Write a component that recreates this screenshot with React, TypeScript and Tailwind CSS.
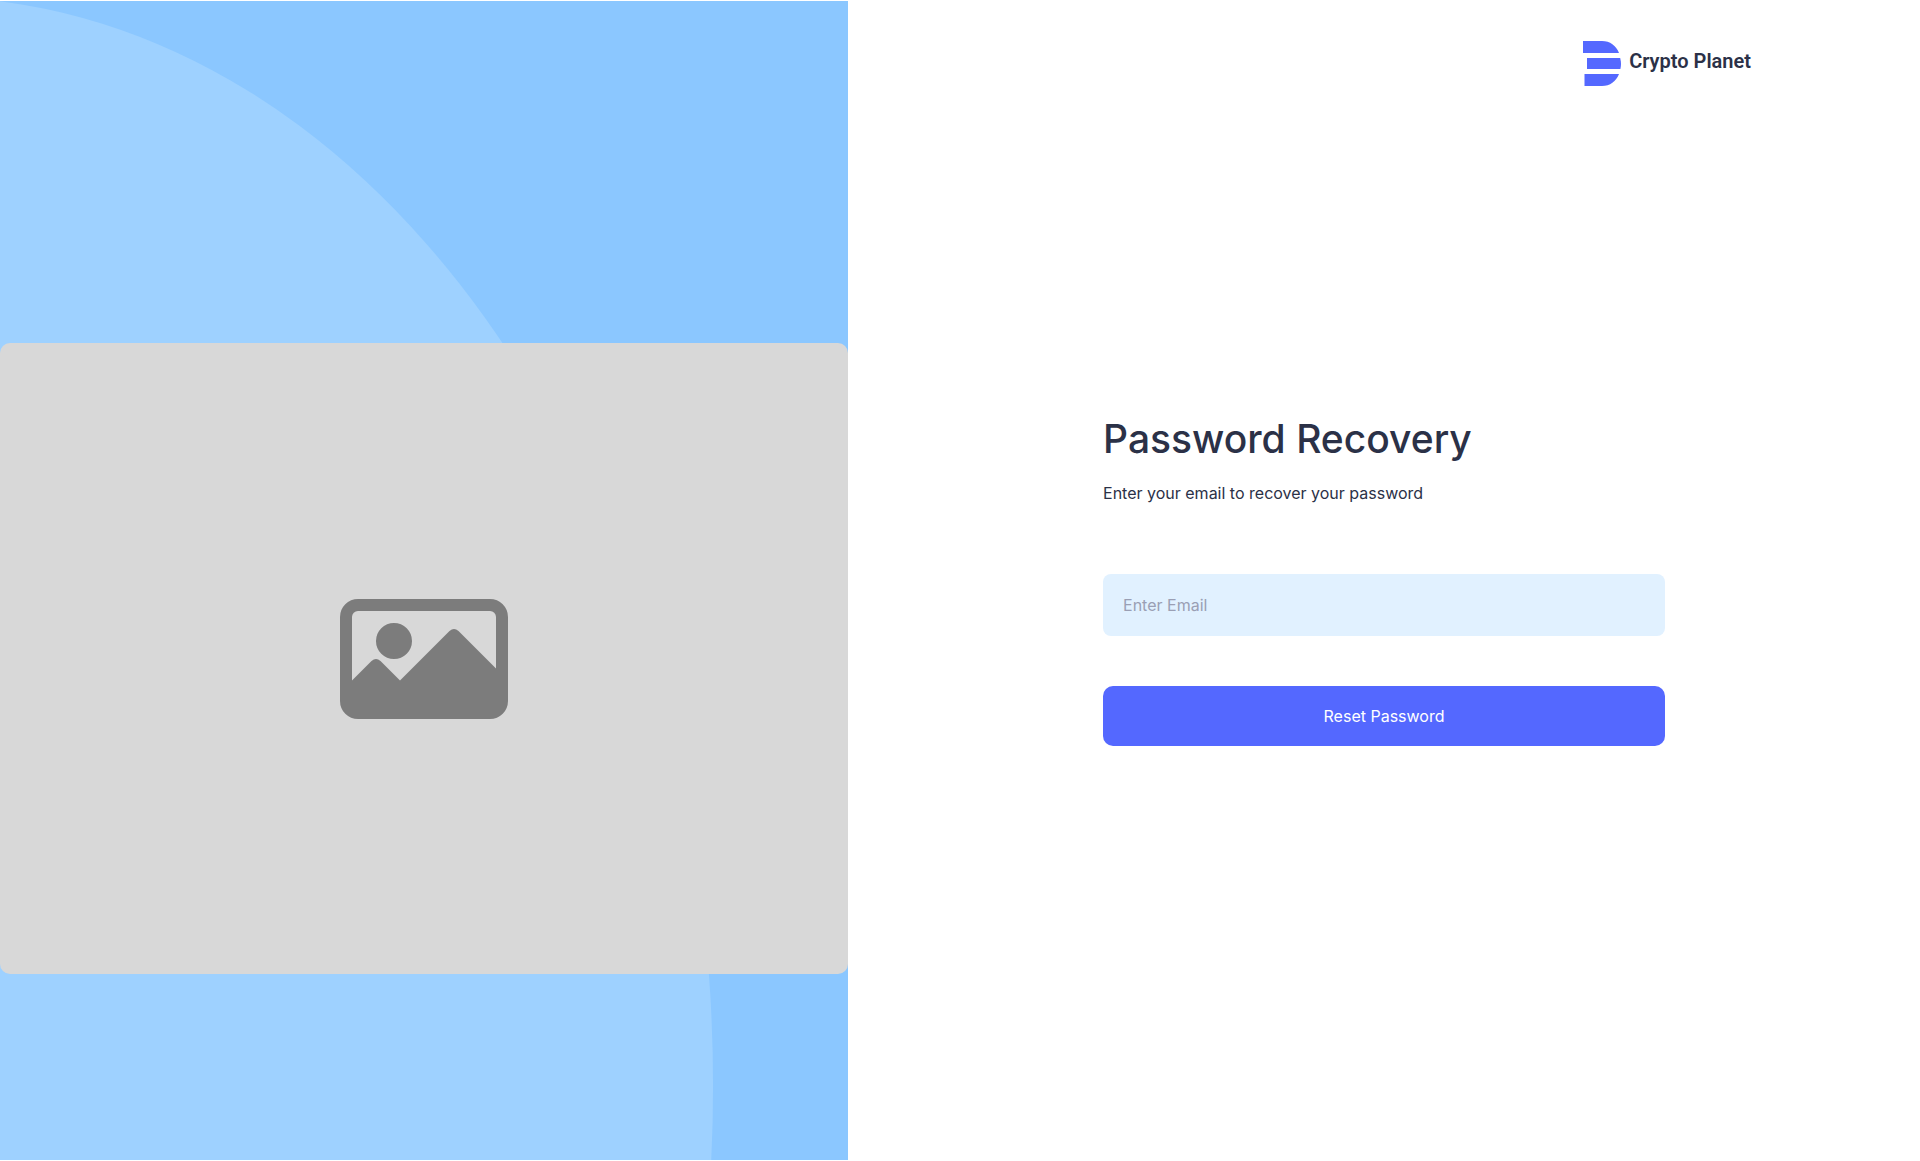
function Logo() {
  return (
    <a href="#" className="flex items-start gap-2 text-[#2b3147]">
      <svg className="h-[45px] w-[38px]" viewBox="0 0 38 45" fill="#5468ff" aria-hidden="true">
        <path d="M0 0H19C27 0 33 4.5 36 12H0Z" />
        <path d="M4 17H37.2C38.2 21 38.2 24.5 37.4 28H4Z" />
        <path d="M1.5 33H36C33 40.5 27 45 19 45H1.5Z" />
      </svg>
      <span className="font-['Roboto',sans-serif] text-[20px] leading-10 font-semibold">Crypto Planet</span>
    </a>
  );
}

function ImagePlaceholder() {
  return (
    <div className="relative flex aspect-[848/631] w-full items-center justify-center rounded-[10px] bg-[#d8d8d8]">
      <svg className="w-[168px]" viewBox="0 0 168 120" role="img" aria-label="Image placeholder">
        <path
          fill="#7c7c7c"
          fillRule="evenodd"
          d="M18 0H150A18 18 0 0 1 168 18V102A18 18 0 0 1 150 120H18A18 18 0 0 1 0 102V18A18 18 0 0 1 18 0ZM18 12A6 6 0 0 0 12 18V81.5L31.5 62Q36 58 40.5 62L60 81.5L109.5 32Q114 28 118.5 32L156 69.5V18A6 6 0 0 0 150 12ZM54 24A18 18 0 1 1 54 60A18 18 0 1 1 54 24Z"
        />
      </svg>
    </div>
  );
}

export default function App() {
  return (
    <main className="flex min-h-screen bg-white font-['Inter',sans-serif] text-[#2b3147]">
      <section className="relative my-px w-[44.17%] shrink-0 overflow-hidden bg-[#8bc7ff] pt-[342px]">
        <svg
          className="absolute inset-0 h-full w-full"
          viewBox="0 0 848 1159"
          preserveAspectRatio="none"
          aria-hidden="true"
        >
          <ellipse cx="-70" cy="1085" rx="783" ry="1089" fill="#9ed1ff" />
        </svg>
        <ImagePlaceholder />
      </section>

      <section className="flex flex-1 flex-col">
        <header className="flex justify-end pt-[41px] pr-[169px]">
          <Logo />
        </header>
        <form className="mx-auto mt-[329px] w-full max-w-[562px]">
          <h1 className="text-[39px] leading-12 font-medium">Password Recovery</h1>
          <p className="mt-[18px] text-[16px] leading-6">Enter your email to recover your password</p>
          <input
            type="email"
            aria-label="Email"
            placeholder="Enter Email"
            className="mt-[69px] block h-[62px] w-full rounded-lg bg-[#e1f1ff] px-5 text-[16px] outline-none placeholder:text-[#9a9fb4]"
          />
          <button
            type="button"
            className="mt-[50px] block h-[60px] w-full rounded-[10px] bg-[#5468ff] text-[16px] text-white"
          >
            Reset Password
          </button>
        </form>
      </section>
    </main>
  );
}
